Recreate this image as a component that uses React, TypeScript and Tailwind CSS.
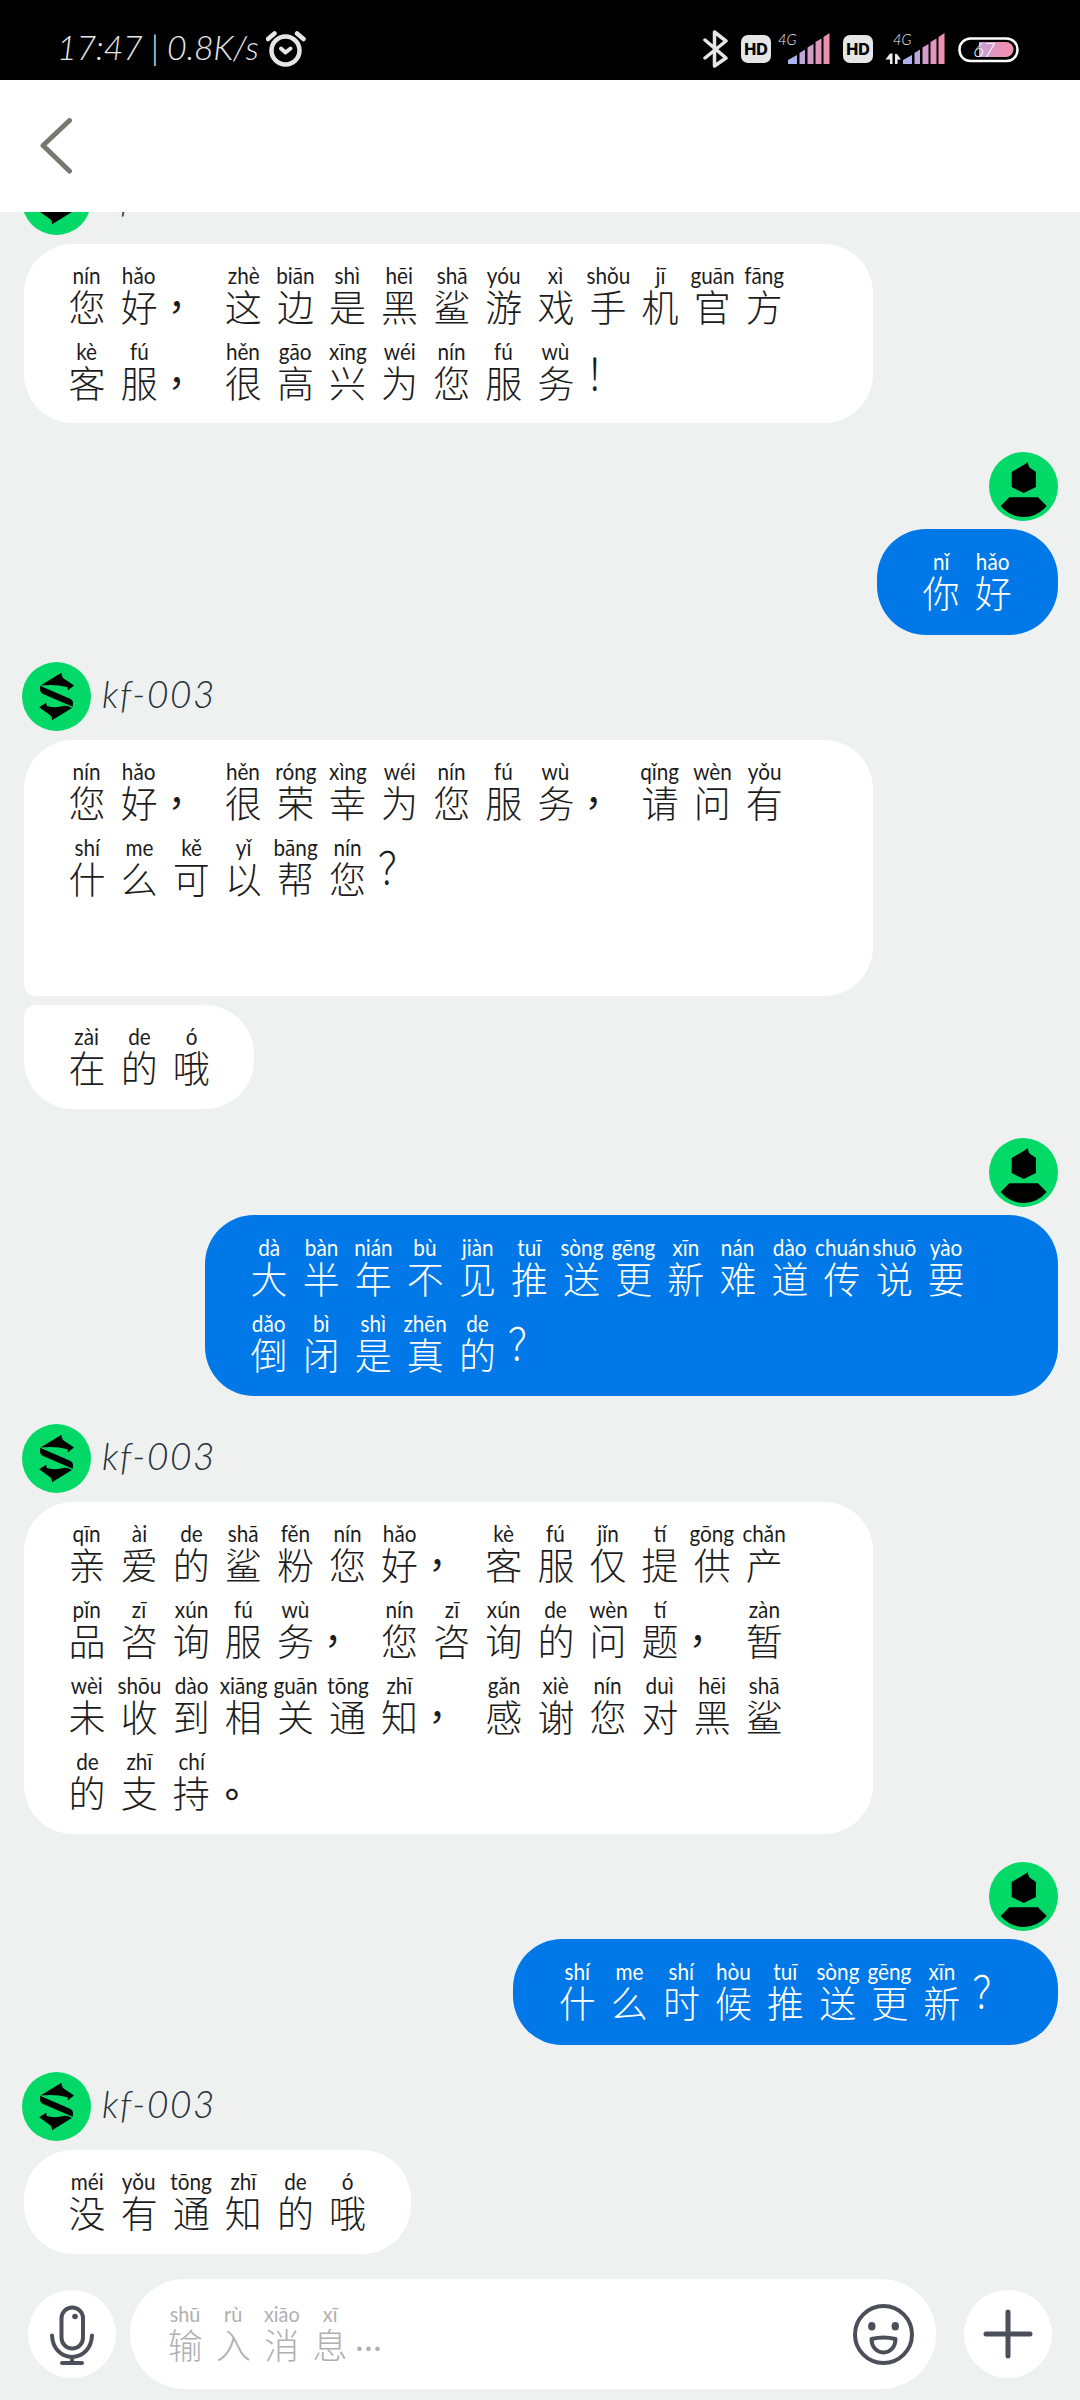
type Side = 'agent' | 'user';

interface Bubble {
  // Every token is pinyin followed by its character, punctuation stands alone
  text: string;
  shape?: string;
}

interface Message {
  from: Side;
  gap: string;
  bubbles: Bubble[];
}

const messages: Message[] = [
  {
    from: 'agent',
    gap: '-mt-[46px]',
    bubbles: [
      {
        text: 'nín您 hǎo好 ， zhè这 biān边 shì是 hēi黑 shā鲨 yóu游 xì戏 shǒu手 jī机 guān官 fāng方 kè客 fú服 ， hěn很 gāo高 xīng兴 wéi为 nín您 fú服 wù务 ！',
        shape: 'h-[179px]',
      },
    ],
  },
  { from: 'user', gap: 'mt-[29px]', bubbles: [{ text: 'nǐ你 hǎo好', shape: 'min-w-[181px]' }] },
  {
    from: 'agent',
    gap: 'mt-[27px]',
    bubbles: [
      {
        text: 'nín您 hǎo好 ， hěn很 róng荣 xìng幸 wéi为 nín您 fú服 wù务 ， qǐng请 wèn问 yǒu有 shí什 me么 kě可 yǐ以 bāng帮 nín您 ？',
        shape: 'h-[256px] rounded-bl-[12px]',
      },
      { text: 'zài在 de的 ó哦', shape: 'mt-[9px] rounded-tl-[12px]' },
    ],
  },
  {
    from: 'user',
    gap: 'mt-[29px]',
    bubbles: [
      {
        text: 'dà大 bàn半 nián年 bù不 jiàn见 tuī推 sòng送 gēng更 xīn新 nán难 dào道 chuán传 shuō说 yào要 dǎo倒 bì闭 shì是 zhēn真 de的 ？',
        shape: 'h-[181px]',
      },
    ],
  },
  {
    from: 'agent',
    gap: 'mt-[28px]',
    bubbles: [
      {
        text: 'qīn亲 ài爱 de的 shā鲨 fěn粉 nín您 hǎo好 ， kè客 fú服 jǐn仅 tí提 gōng供 chǎn产 pǐn品 zī咨 xún询 fú服 wù务 ， nín您 zī咨 xún询 de的 wèn问 tí题 ， zàn暂 wèi未 shōu收 dào到 xiāng相 guān关 tōng通 zhī知 ， gǎn感 xiè谢 nín您 duì对 hēi黑 shā鲨 de的 zhī支 chí持 。',
      },
    ],
  },
  {
    from: 'user',
    gap: 'mt-[28px]',
    bubbles: [{ text: 'shí什 me么 shí时 hòu候 tuī推 sòng送 gēng更 xīn新 ？' }],
  },
  { from: 'agent', gap: 'mt-[27px]', bubbles: [{ text: 'méi没 yǒu有 tōng通 zhī知 de的 ó哦' }] },
];

const punctuationStyle: Record<string, string> = {
  '，': '-translate-x-[5px] -translate-y-[12px] font-normal',
  '。': '-translate-y-[10px] font-medium',
  '！': '-translate-x-[4px] -translate-y-[10px] scale-y-120',
  '？': '-translate-x-[3px] -translate-y-[12px] scale-y-120',
};

const PinyinText = ({ text }: { text: string }) => (
  <div className="flex flex-wrap">
    {text.split(' ').map((token, i) => {
      const char = token.slice(-1);
      const pinyin = token.slice(0, -1);
      return (
        <div key={i} className="flex h-[76px] w-[52.1px] flex-col items-center pt-[3px]">
          <span className="h-[25px] scale-x-90 whitespace-nowrap text-[23px] font-normal leading-[25px]">{pinyin}</span>
          <span className={`text-[37px] leading-[40px] ${punctuationStyle[char] ?? ''}`}>{char}</span>
        </div>
      );
    })}
  </div>
);

const AgentAvatar = () => (
  <svg viewBox="0 0 69 69" className="size-[69px] shrink-0">
    <circle cx="34.5" cy="34.5" r="34.5" fill="#03d967" />
    <path d="M18.500 23.500 39.500 10.700Q39.200 13.500 41 16L52 23.500 46 28.300 45.500 25.300Q34 21.800 18.500 23.500Z" />
    <path d="M18 23.700 48.600 37Q51 38.500 51 40.500L50.700 44.700 20.500 31.800Q18.200 30.500 18 28Z" />
    <path d="M50 46 30 58.300Q30.300 55 28.500 53.500L17.200 45.300 24.100 40.700 24.900 44Q34 46.500 42 43.800Q46 43.500 50 46Z" />
  </svg>
);

const UserAvatar = () => (
  <svg viewBox="0 0 69 69" className="size-[69px] shrink-0">
    <circle cx="34.5" cy="34.5" r="34.5" fill="#03d967" />
    <path d="M22.700 20 35 12.700 39 10Q38.800 13.500 40.500 15.500L47 20V35L34.700 41 22.700 35Z" />
    <path d="M20.300 45.300H49L57.700 54Q48 65 34.700 65T11.700 54Z" />
  </svg>
);

const ChatMessage = ({ message }: { message: Message }) => {
  const isUser = message.from === 'user';
  return (
    <div className={`flex flex-col ${isUser ? 'items-end' : 'items-start'} ${message.gap}`}>
      {isUser ? (
        <UserAvatar />
      ) : (
        <div className="-ml-0.5 flex h-[69px] items-center gap-[11px]">
          <AgentAvatar />
          <span className="pb-[7px] font-['Lato'] text-[37px] font-light italic leading-none tracking-[1.6px] text-[#26323a]">
            kf-003
          </span>
        </div>
      )}
      <div className={`flex flex-col ${isUser ? 'mt-[8px]' : 'mt-[9px]'}`}>
        {message.bubbles.map((bubble, i) => (
          <div
            key={i}
            className={`w-fit rounded-[49px] ${
              isUser
                ? 'max-w-[853px] bg-[#0078e7] pt-[17px] pr-[38px] pb-[13px] pl-[38px] text-white'
                : 'max-w-[849px] bg-white px-[37px] pt-[16px] pb-[12px] text-[#1c1c1c]'
            } ${bubble.shape ?? ''}`}
          >
            <PinyinText text={bubble.text} />
          </div>
        ))}
      </div>
    </div>
  );
};

const HdBadge = () => (
  <span className="flex h-[28px] w-[30px] items-center justify-center rounded-[7px] bg-[#e6e6e6] font-['Inter'] text-[16px] font-extrabold leading-none text-black">
    HD
  </span>
);

const Signal = ({ data }: { data?: boolean }) => (
  <svg viewBox="0 0 60 40" className="h-[40px] w-[60px]">
    <defs>
      <linearGradient id="signal" gradientUnits="userSpaceOnUse" x1="15" x2="50" y1="0" y2="0">
        <stop offset="0" stopColor="#a9b4f0" />
        <stop offset="0.45" stopColor="#d09ccb" />
        <stop offset="1" stopColor="#ee8fae" />
      </linearGradient>
    </defs>
    <text x="0" y="16" fill="#eeeeee" fontFamily="Lato" fontWeight="300" fontStyle="italic" fontSize="16.5" textLength="18.5" lengthAdjust="spacingAndGlyphs">
      4G
    </text>
    <g fill="url(#signal)">
      <path d="M10 35V31L19 26V35Z" />
      <path d="M21.500 35V24L27 20.500V35Z" />
      <path d="M29.500 35V18.500L35.500 15V35Z" />
      <path d="M37.500 35V13L43.500 9.500V35Z" />
      <path d="M45.500 35V8L51.500 4V35Z" />
    </g>
    {data && (
      <g fill="#eeeeee">
        <path d="M-3 24.500H-0.500V35H-3V30.500H-7.500Z" />
        <path d="M2 25H4L8 30.500H4.500V35H2Z" />
      </g>
    )}
  </svg>
);

const StatusBar = () => (
  <div className="flex h-[80px] shrink-0 items-start bg-black pl-[57px] text-[#e6e6e6]">
    <span className="mt-[28px] w-[207px] whitespace-nowrap font-['Lato'] text-[34px] font-light italic leading-[38px] tracking-[-0.3px]">
      17:47 | 0.8K/s
    </span>
    <svg viewBox="0 0 40 38" className="mt-[30px] ml-[2px] h-[38px] w-[40px]" fill="none" stroke="#e6e6e6" strokeLinecap="round" strokeLinejoin="round">
      <circle cx="19.5" cy="20.5" r="14" strokeWidth="4.5" />
      <path d="M15 18.500 19.500 22.500 24.500 18.500" strokeWidth="4" />
      <path d="M2 9 8.500 3.500M31 3.500 37.500 9" strokeWidth="4.5" />
    </svg>
    <div className="ml-[396px] flex">
      <svg viewBox="0 0 26 40" className="mt-[29px] h-[40px] w-[26px]" fill="none" stroke="#e6e6e6" strokeWidth="3.5" strokeLinejoin="round" strokeLinecap="round">
        <path d="M3 11 24 29 12.500 37V3L24 12 3 29" />
      </svg>
      <div className="mt-[35px] ml-[13px]">
        <HdBadge />
      </div>
      <div className="mt-[29px] ml-[7px]">
        <Signal />
      </div>
      <div className="mt-[35px] ml-[5px]">
        <HdBadge />
      </div>
      <div className="mt-[29px] ml-[20px] [&_svg]:overflow-visible">
        <Signal data />
      </div>
      <svg viewBox="0 0 62 26" className="mt-[37px] ml-[5px] h-[26px] w-[62px]">
        <defs>
          <linearGradient id="battery">
            <stop offset="0" stopColor="#c3a2d6" />
            <stop offset="0.7" stopColor="#ec90b4" />
          </linearGradient>
        </defs>
        <rect x="1.5" y="1.5" width="58" height="22.5" rx="11" fill="none" stroke="#ffffff" strokeWidth="2.5" />
        <path d="M21 5H48A7.500 7.500 0 0 1 48 20H21Z" fill="url(#battery)" />
        <text x="15" y="19.5" fill="#ffffff" fontFamily="Lato" fontWeight="300" fontStyle="italic" fontSize="20">
          67
        </text>
      </svg>
    </div>
  </div>
);

const InputBar = () => (
  <div className="flex h-[121px] shrink-0 items-start pl-[28px]">
    <button className="mt-[11px] flex size-[88px] items-center justify-center rounded-full bg-white">
      <svg viewBox="0 0 88 88" className="size-full" fill="none" stroke="#4b4f5a" strokeWidth="4" strokeLinecap="round">
        <rect x="33.5" y="17.5" width="21.5" height="41" rx="10.75" />
        <path d="M24 45.500C24.500 58 33 67 44 67S63.500 58 64 45.500M44 67V72M34 73H54" />
        <circle cx="47" cy="26.5" r="2.8" fill="#4b4f5a" stroke="none" />
      </svg>
    </button>
    <div className="ml-[14px] flex h-[110px] w-[806px] items-center justify-between rounded-full bg-white pr-[22px] pl-[31px] text-[#b0b0b0]">
      <div className="flex">
        {['shū输', 'rù入', 'xiāo消', 'xī息', '…'].map((token) => (
          <div key={token} className="flex h-[66px] w-[48.3px] flex-col items-center">
            <span className="h-[25px] scale-x-90 whitespace-nowrap text-[22px] font-normal leading-[25px]">{token.slice(0, -1)}</span>
            <span
              className={
                token === '…'
                  ? "-translate-x-[10px] -translate-y-[9px] font-['Lato'] text-[35px] font-normal leading-[40px]"
                  : '-translate-y-px text-[35px] leading-[40px]'
              }
            >
              {token.slice(-1)}
            </span>
          </div>
        ))}
      </div>
      <svg viewBox="0 0 61 61" className="size-[61px]" fill="none" stroke="#4b4f5a" strokeWidth="4">
        <circle cx="30.5" cy="30.5" r="28.5" />
        <path d="M18.500 35Q30.500 32 42.500 35C42.500 43 37 48.500 30.500 48.500S18.500 43 18.500 35Z" strokeLinejoin="round" />
        <ellipse cx="18.8" cy="22.3" rx="3.7" ry="4.3" fill="#4b4f5a" stroke="none" />
        <ellipse cx="42.3" cy="22.3" rx="3.7" ry="4.3" fill="#4b4f5a" stroke="none" />
      </svg>
    </div>
    <button className="mt-[11px] ml-[28px] size-[88px] rounded-full bg-white">
      <svg viewBox="0 0 88 88" className="size-full" stroke="#4b4f5a" strokeWidth="5" strokeLinecap="round">
        <path d="M44 22V66M22 44H66" />
      </svg>
    </button>
  </div>
);

export default function App() {
  return (
    <div className="flex h-[2400px] w-[1080px] flex-col overflow-hidden bg-[#eff1f1] font-['Lato','Noto_Sans_CJK_SC',sans-serif] font-light">
      <StatusBar />
      <header className="flex h-[132px] shrink-0 items-center bg-white pl-[40px]">
        <svg viewBox="0 0 34 56" className="h-[56px] w-[34px]" fill="none" stroke="#787770" strokeWidth="5" strokeLinecap="round" strokeLinejoin="round">
          <path d="M29.500 2.500 3 27.500 29.500 53" />
        </svg>
      </header>
      <main className="h-[2067px] shrink-0 overflow-hidden pr-[22px] pl-[24px]">
        {messages.map((message, i) => (
          <ChatMessage key={i} message={message} />
        ))}
      </main>
      <InputBar />
    </div>
  );
}
